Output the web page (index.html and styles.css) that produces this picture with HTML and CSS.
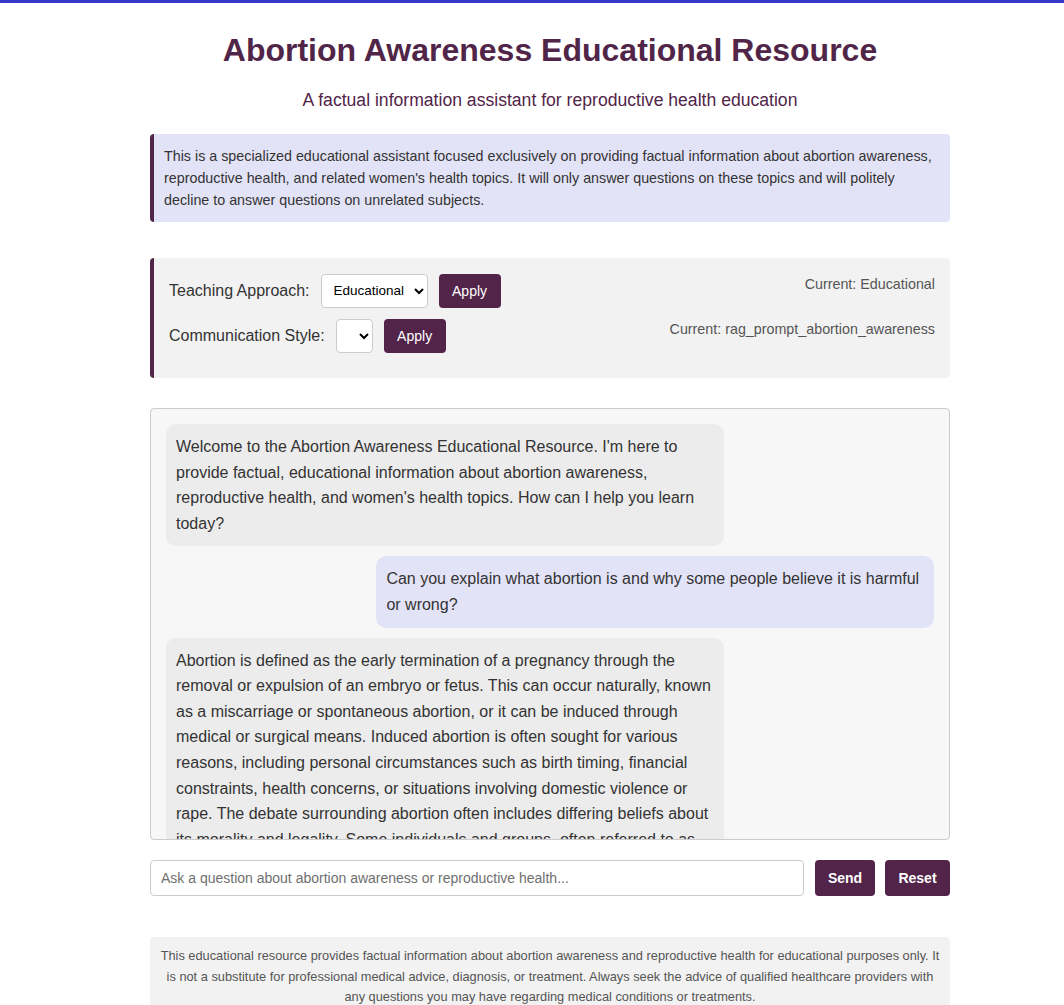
FILE: index.html
```html
<!DOCTYPE html>
<html lang="en">
<head>
<meta charset="utf-8">
<title>Abortion Awareness Educational Resource</title>
<link rel="stylesheet" href="styles.css">
</head>
<body>
<div class="page">
  <header class="header">
    <h1 class="title">Abortion Awareness Educational Resource</h1>
    <p class="subtitle">A factual information assistant for reproductive health education</p>
  </header>

  <div class="info">This is a specialized educational assistant focused exclusively on providing factual information about abortion awareness, reproductive health, and related women's health topics. It will only answer questions on these topics and will politely decline to answer questions on unrelated subjects.</div>

  <div class="controls">
    <div class="control-row">
      <div class="control-left">
        <label class="control-label">Teaching Approach:</label>
        <select class="select select-wide"><option>Educational</option></select>
        <button class="btn btn-apply">Apply</button>
      </div>
      <div class="current">Current: Educational</div>
    </div>
    <div class="control-row">
      <div class="control-left">
        <label class="control-label">Communication Style:</label>
        <select class="select select-narrow"><option></option></select>
        <button class="btn btn-apply">Apply</button>
      </div>
      <div class="current">Current: rag_prompt_abortion_awareness</div>
    </div>
  </div>

  <div class="chat">
    <div class="msg msg-bot">Welcome to the Abortion Awareness Educational Resource. I'm here to provide factual, educational information about abortion awareness, reproductive health, and women's health topics. How can I help you learn today?</div>
    <div class="msg msg-user">Can you explain what abortion is and why some people believe it is harmful or wrong?</div>
    <div class="msg msg-bot">Abortion is defined as the early termination of a pregnancy through the removal or expulsion of an embryo or fetus. This can occur naturally, known as a miscarriage or spontaneous abortion, or it can be induced through medical or surgical means. Induced abortion is often sought for various reasons, including personal circumstances such as birth timing, financial constraints, health concerns, or situations involving domestic violence or rape. The debate surrounding abortion often includes differing beliefs about its morality and legality. Some individuals and groups, often referred to as pro-life, believe that life begins at conception and that abortion is therefore morally wrong.</div>
  </div>

  <div class="input-row">
    <input class="input" type="text" placeholder="Ask a question about abortion awareness or reproductive health...">
    <button class="btn btn-send">Send</button>
    <button class="btn btn-reset">Reset</button>
  </div>

  <footer class="footer">This educational resource provides factual information about abortion awareness and reproductive health for educational purposes only. It is not a substitute for professional medical advice, diagnosis, or treatment. Always seek the advice of qualified healthcare providers with any questions you may have regarding medical conditions or treatments.</footer>
</div>
</body>
</html>
```

FILE: styles.css
```css
* { box-sizing: border-box; }

html, body { margin: 0; padding: 0; }

body {
  font-family: "Liberation Sans", Arial, Helvetica, sans-serif;
  color: #333;
  background: #fff;
  border-top: 3px solid #3636c9;
  padding-left: 36px;
}

.page {
  width: 800px;
  margin: 0 auto;
}

.header { text-align: center; }

.title {
  margin: 29px 0 0;
  font-size: 32px;
  line-height: 37px;
  font-weight: bold;
  color: #512548;
}

.subtitle {
  margin: 21px 0 0;
  font-size: 17.6px;
  line-height: 20px;
  color: #512548;
}

.info {
  margin-top: 24px;
  background: #e3e3f7;
  border-left: 4px solid #512548;
  border-radius: 4px;
  padding: 11px 15px 11px 10px;
  font-size: 14.3px;
  line-height: 22px;
  color: #333;
}

.controls {
  margin-top: 36px;
  background: #f2f2f2;
  border-left: 4px solid #512548;
  border-radius: 4px;
  padding: 15px 15px 15px 15px;
}

.control-row {
  display: flex;
  justify-content: space-between;
  align-items: flex-start;
  margin-bottom: 10px;
  height: 35px;
}

.control-left {
  display: flex;
  align-items: center;
  gap: 11px;
  height: 35px;
}

.control-label {
  font-size: 16px;
  color: #333;
}

.select {
  height: 34px;
  border: 1px solid #ccc;
  border-radius: 4px;
  background: #fff;
  font-family: "Liberation Sans", Arial, sans-serif;
  font-size: 13.5px;
  color: #000;
  padding: 0 4px 0 8px;
}

.select-wide { width: 107px; }
.select-narrow { width: 37px; }

.current {
  font-size: 14.3px;
  color: #555;
  padding-top: 3px;
}

.btn {
  height: 34px;
  border: none;
  border-radius: 4px;
  background: #52244a;
  color: #fff;
  font-family: "Liberation Sans", Arial, sans-serif;
  font-size: 14px;
  padding: 0 15px;
  cursor: pointer;
}

.btn-apply { width: 62px; padding: 0; }

.chat {
  margin-top: 30px;
  height: 432px;
  border: 1px solid #ccc;
  border-radius: 4px;
  background: #f7f7f7;
  padding: 15px;
  overflow: hidden;
  display: flex;
  flex-direction: column;
  gap: 10px;
}

.msg {
  width: 557.6px;
  padding: 10px;
  border-radius: 10px;
  font-size: 16px;
  line-height: 25.6px;
  color: #333;
  flex-shrink: 0;
}

.msg-bot {
  background: #ececec;
  align-self: flex-start;
}

.msg-user {
  background: #e3e3f7;
  align-self: flex-end;
}

.input-row {
  margin-top: 20px;
  display: flex;
  gap: 10px;
}

.input {
  flex: 1;
  height: 36px;
  border: 1px solid #ccc;
  border-radius: 4px;
  padding: 0 10px;
  font-family: "Liberation Sans", Arial, sans-serif;
  font-size: 14px;
  color: #333;
  margin-right: 1px;
}

.input::placeholder { color: #6f6f6f; }

.btn-send, .btn-reset {
  height: 36px;
  font-weight: bold;
}

.btn-send { width: 60px; padding: 0; }
.btn-reset { width: 65px; padding: 0; }

.footer {
  margin-top: 41px;
  background: #f2f2f2;
  border-radius: 4px;
  padding: 9px 10px;
  text-align: center;
  font-size: 12.8px;
  line-height: 20.5px;
  color: #555;
}
```
